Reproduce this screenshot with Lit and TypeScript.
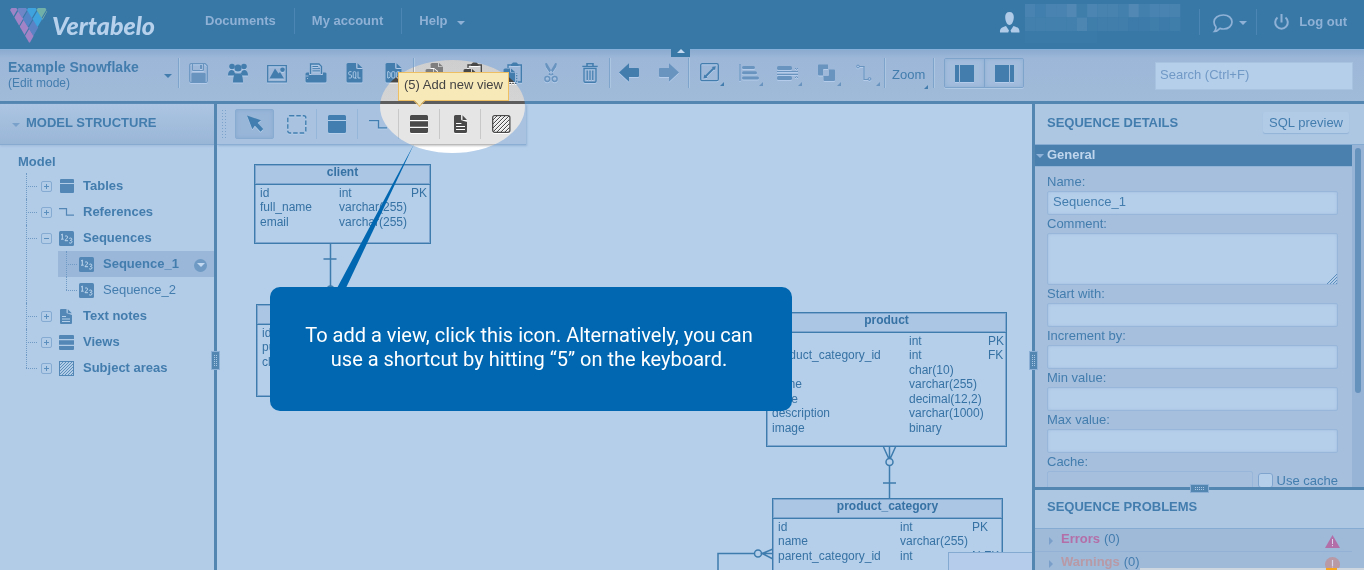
import { LitElement, html, css, svg, nothing, TemplateResult } from "lit";
import { customElement, property } from "lit/decorators.js";
import { classMap } from "lit/directives/class-map.js";

const glyph = (size: number, body: TemplateResult, w = size) =>
  html`<svg class="glyph" width=${w} height=${size} viewBox="0 0 ${w} ${size}" fill="currentColor" aria-hidden="true">${body}</svg>`;

const LIGHT = "#b5cfea";

const icons: Record<string, () => TemplateResult> = {
  save: () => glyph(20, svg`<path d="M2.200.7h14l2.100 2.100V18a1.500 1.500 0 0 1-1.500 1.500H2.200A1.500 1.500 0 0 1 .7 18V2.200A1.500 1.500 0 0 1 2.200.7z" fill="none" stroke="currentColor" stroke-width="1.200"/><path d="M3.500 1v6.500h11V1" fill="none" stroke="currentColor"/><path d="M11 2h2v4h-2zM3.500 10h12a1.200 1.200 0 0 1 1.200 1.200V19H2.300v-7.800A1.200 1.200 0 0 1 3.500 10z"/>`, 19),
  users: () => glyph(20, svg`<circle cx="4" cy="3.500" r="2.800"/><circle cx="16" cy="3.500" r="2.800"/><circle cx="10" cy="5" r="3.600"/><path d="M0 12c0-3 1.500-5 4-5l2 1c.3 1.500 1 2 1.700 2.600L6 12.500H0zM20 12c0-3-1.500-5-4-5l-2 1c-.3 1.500-1 2-1.700 2.600L14 12.500h6zM5 19.500c0-5 1-8.500 3-9h4c2 .5 3 4 3 9z"/>`),
  image: () => glyph(20, svg`<path d="M.7 2.700h18.600v16.100H.7z" fill="none" stroke="currentColor" stroke-width="1.300"/><circle cx="15.500" cy="6.700" r="2.300"/><path d="M2.500 15.500 8 5.500l3.500 5 1.500-1.500 4 6.500z"/>`),
  print: () => glyph(20, svg`<path d="M5.500 11V1h8.500l2.500 2.500V11" fill="none" stroke="currentColor" stroke-width="1.300"/><path d="M7.500 3.500h5.500M7.500 5.700h7.500M7.500 7.900h7.500" stroke="currentColor"/><path d="M2 9.500h2v2.500h14V9.500h1.500A1.500 1.500 0 0 1 21.500 11v7a1.500 1.500 0 0 1-1.500 1.500H2A1.500 1.500 0 0 1 .5 18v-7A1.500 1.500 0 0 1 2 9.500z"/><path d="M.5 13h3M2 15.500h1" stroke="#9fb9d9"/>`, 22),
  sql: () => glyph(20, svg`<path d="M2 0h8v4.500a1.500 1.500 0 0 0 1.500 1.500H16.500v12.500a1 1 0 0 1-1 1H2a1.500 1.500 0 0 1-1.500-1.500V1.500A1.500 1.500 0 0 1 2 0zM11.500.3 16.500 5h-5z"/><path d="M5.500 8.700H3.700a1 1 0 0 0-1 1v1.100a1 1 0 0 0 1 1h.8a1 1 0 0 1 1 1v1.200a1 1 0 0 1-1 1H2.700M8.200 8.700h.6a1 1 0 0 1 1 1v4.300a1 1 0 0 1-1 1h-.6a1 1 0 0 1-1-1V9.700a1 1 0 0 1 1-1zM9 14l1.200 2M12 8.500V15h2.500" fill="none" stroke="${LIGHT}" stroke-width=".9"/>`, 17),
  doc: () => glyph(20, svg`<path d="M2 0h8v4.500a1.500 1.500 0 0 0 1.500 1.500H16.500v12.500a1 1 0 0 1-1 1H2a1.500 1.500 0 0 1-1.500-1.500V1.500A1.500 1.500 0 0 1 2 0zM11.500.3 16.500 5h-5z"/><path d="M2.700 8.700v6.300h1.300l1.200-1.200V9.900L4 8.700zM7.700 8.700h1.200a1 1 0 0 1 1 1V14a1 1 0 0 1-1 1H7.700a1 1 0 0 1-1-1V9.700a1 1 0 0 1 1-1zM14.500 8.700h-1.800a1 1 0 0 0-1 1V14a1 1 0 0 0 1 1h1.800" fill="none" stroke="${LIGHT}" stroke-width=".9"/>`, 17),
  copy: () => glyph(22, svg`<path d="M7 1h6v4h5v10h-5V9L9 6H5.500V2.500A1.500 1.500 0 0 1 7 1zM14 1l4 3.500h-4zM2 7h6v4h5v11H2A1.500 1.500 0 0 1 .5 20.500v-12A1.500 1.500 0 0 1 2 7zM9 7l4 3.500H9z"/>`, 18),
  paste: () => glyph(22, svg`<path d="M5 6V3h13.300v17H13" fill="none" stroke="currentColor" stroke-width="1.400"/><path d="M8 2.500 10 .5h3.500l2 2V4H8zM2 7h6v4h5v11H2A1.500 1.500 0 0 1 .5 20.500v-12A1.500 1.500 0 0 1 2 7zM9 7l4 3.500H9z"/>`, 20),
  duplicate: () => glyph(22, svg`<path d="M5 6V3h13.300v17H15" fill="none" stroke="currentColor" stroke-width="1.400"/><path d="M8 2.500 10 .5h3.500l2 2V4H8zM2 6.500h5v4h5V20H2A1.500 1.500 0 0 1 .5 18.500V8A1.500 1.500 0 0 1 2 6.500zM8 6.500l4 3.500H8z"/><path d="M3.700 21.300h10v-10" fill="none" stroke="currentColor" stroke-width="1.200" stroke-dasharray="1.500 1.300"/>`, 18),
  cut: () => glyph(20, svg`<path d="M1 .5 2.800 0 9.500 11.500l-1.800 1.200L1.800 4zM13 .5 11.200 0 4.500 11.500l1.800 1.200L12.200 4z"/><circle cx="3.300" cy="16" r="2.400" fill="none" stroke="currentColor" stroke-width="1.500"/><circle cx="10.700" cy="16" r="2.400" fill="none" stroke="currentColor" stroke-width="1.500"/>`, 13),
  trash: () => glyph(20, svg`<path d="M.3 3.500h15.400M5 3V.8h6V3" fill="none" stroke="currentColor" stroke-width="1.600"/><path d="M2 5.500h12V18a1.200 1.200 0 0 1-1.200 1.200H3.200A1.200 1.200 0 0 1 2 18z" fill="none" stroke="currentColor" stroke-width="1.400"/><path d="M5.200 7.500v9.500M8 7.500v9.500M10.800 7.500v9.500" stroke="currentColor" stroke-width="1.300"/>`, 15),
  undo: () => glyph(19, svg`<path d="M0 9.500 10 .3V5h9a1 1 0 0 1 1 1v7a1 1 0 0 1-1 1h-9v4.700z"/>`, 22),
  redo: () => glyph(19, svg`<path d="M20 9.500 10 .3V5H1a1 1 0 0 0-1 1v7a1 1 0 0 0 1 1h9v4.700z"/>`, 20),
  line: () => glyph(19, svg`<rect x=".7" y=".7" width="17.600" height="17" rx="1.500" fill="none" stroke="currentColor" stroke-width="1.300"/><path d="M5 14 14.500 4.500" stroke="currentColor" stroke-width="1.800"/><path d="m3.500 15.500.8-4 3.200 3.200zM15.800 3.200l-.8 4-3.200-3.200z"/>`, 17),
  align: () => glyph(19, svg`<path d="M1 1v17" stroke="currentColor" stroke-width="1.200"/><rect x="3" y="3" width="13" height="3" rx="1.500"/><rect x="3" y="8.300" width="15" height="3" rx="1.500"/><rect x="3" y="13.600" width="17" height="3" rx="1.500"/>`, 18),
  spacing: () => glyph(19, svg`<rect y="3" width="15" height="4" rx="1.500"/><rect y="13" width="15" height="4" rx="1.500"/><path d="M0 8.500h21M0 11.500h21" stroke="currentColor"/><path d="m18 5 1.500 1.500L21 5M18 15l1.500-1.500L21 15" fill="none" stroke="currentColor"/>`, 20),
  order: () => glyph(18, svg`<path d="M1 .5h9V5H6a1 1 0 0 0-1 1v5.500H1a1 1 0 0 1-1-1v-9a1 1 0 0 1 1-1z"/><path d="M11 5.500h5a1 1 0 0 1 1 1V16a1 1 0 0 1-1 1H6.500a1 1 0 0 1-1-1v-4H10a1 1 0 0 0 1-1z"/>`, 15),
  connector: () => glyph(18, svg`<path d="M3 2.500h5V15.500h4" fill="none" stroke="currentColor" stroke-width="1.200"/><circle cx="2" cy="2.500" r="1.400" fill="none" stroke="currentColor"/><circle cx="13.500" cy="15" r="1.400" fill="none" stroke="currentColor"/>`, 17),
  leftPane: () => glyph(17, svg`<path d="M0 0h4v17H0zM5 0h14v17H5z"/>`, 19),
  rightPane: () => glyph(17, svg`<path d="M0 0h14v17H0zM15 0h4v17h-4z"/>`, 19),
  pointer: () => glyph(18, svg`<path d="M0 .5 14 5.300l-3.300 2.600 5.500 6-2.600 2.800-5.700-6-2.600 3.600z"/>`, 16),
  marquee: () => glyph(19, svg`<rect x=".8" y=".8" width="18" height="17.200" rx="2" fill="none" stroke="currentColor" stroke-width="1.400" stroke-dasharray="4.500 2"/>`, 19),
  table: () => glyph(18, svg`<path d="M1.500 0h15A1.500 1.500 0 0 1 18 1.500V5H0V1.500A1.500 1.500 0 0 1 1.500 0zM0 6h18v10.500a1.500 1.500 0 0 1-1.500 1.500h-15A1.500 1.500 0 0 1 0 16.500z"/>`),
  reference: () => glyph(10, svg`<path d="M0 1.700h9.500v7.200H18" fill="none" stroke="currentColor" stroke-width="1.300"/>`, 18),
  view: () => glyph(18, svg`<path d="M1.500 0h15A1.500 1.500 0 0 1 18 1.500V5H0V1.500A1.500 1.500 0 0 1 1.500 0zM0 6.200h18v5.500H0zM0 13h18v3.500a1.500 1.500 0 0 1-1.500 1.500h-15A1.500 1.500 0 0 1 0 16.500z"/>`),
  note: () => glyph(18, svg`<path d="M1.500 0H7v4.200A1.300 1.300 0 0 0 8.300 5.500L13 7v9.500a1.500 1.500 0 0 1-1.500 1.500h-10A1.500 1.500 0 0 1 0 16.500v-15A1.500 1.500 0 0 1 1.500 0zM8.500.3 13 5H8.500z"/><path d="M2.300 8.500h5M2.300 11.500h8.500M2.300 14.500h8.500" stroke="#dfeaf6" stroke-width="1.200"/>`, 13),
  area: () => glyph(18, svg`<rect x=".7" y=".7" width="17.200" height="16.600" rx="2" fill="none" stroke="currentColor" stroke-width="1.300"/><path d="M1 5l4-4M1 9l8-8M1 13l12-12M1 17 17 1M5 17 17.500 4.500M9 17l8.500-8.500M13 17l4.500-4.500" stroke="currentColor" stroke-width="1"/>`, 19),
  tTable: () => glyph(14, svg`<path d="M1 0h12a1 1 0 0 1 1 1v3H0V1a1 1 0 0 1 1-1zM0 5h14v8a1 1 0 0 1-1 1H1a1 1 0 0 1-1-1z"/>`),
  tReference: () => glyph(8, svg`<path d="M0 .6h7.500v6.500H15" fill="none" stroke="currentColor" stroke-width="1.200"/>`, 15),
  tSequence: () => glyph(15, svg`<rect width="15" height="15" rx="1.500"/><path d="M2 4.200 3.300 3v5M2 8.200h2.700M6 5.500c.3-.9 2.700-.9 2.600.6C8.500 7.300 6.500 8.400 6 9.700h3M10.300 7.500c.6-.8 2.600-.6 2.500.6 0 1-.8 1.300-1.500 1.300 1 0 1.700.5 1.700 1.400 0 1.500-2.200 1.700-2.900.8" fill="none" stroke="#c3d9ef" stroke-width=".95"/>`),
  tNote: () => glyph(15, svg`<path d="M2 0h5.500v3.500A1 1 0 0 0 8.500 4.500L13 6v8a1 1 0 0 1-1 1H2a1 1 0 0 1-1-1V1a1 1 0 0 1 1-1zM8.800.3l4 4h-4z"/><path d="M3 7.500h4M3 10h8M3 12.500h8" stroke="${LIGHT}"/>`, 15),
  tView: () => glyph(15, svg`<path d="M1 0h13a1 1 0 0 1 1 1v3H0V1a1 1 0 0 1 1-1zM0 5.200h15v4.500H0zM0 11h15v3a1 1 0 0 1-1 1H1a1 1 0 0 1-1-1z"/>`),
  tArea: () => glyph(15, svg`<rect x=".5" y=".5" width="14" height="14" fill="none" stroke="currentColor"/><path d="M1 4l3-3M1 7l6-6M1 10l9-9M1 13 13 1M2.500 14.500l12-12M5.500 14.500l9-9M8.500 14.500l6-6M11.500 14.500l3-3" stroke="currentColor" stroke-width=".9"/>`),
};

interface Tool { icon: string; label: string; disabled?: boolean; menu?: boolean; }

const toolGroups: Tool[][] = [
  [
    { icon: "save", label: "Save", disabled: true },
    { icon: "users", label: "Share" },
    { icon: "image", label: "Export image" },
    { icon: "print", label: "Print" },
    { icon: "sql", label: "Generate SQL" },
    { icon: "doc", label: "Generate documentation" },
  ],
  [
    { icon: "copy", label: "Copy", disabled: true },
    { icon: "paste", label: "Paste" },
    { icon: "duplicate", label: "Paste with references" },
    { icon: "cut", label: "Cut", disabled: true },
    { icon: "trash", label: "Delete" },
  ],
  [
    { icon: "undo", label: "Undo" },
    { icon: "redo", label: "Redo", disabled: true },
  ],
  [
    { icon: "line", label: "Line style", menu: true },
    { icon: "align", label: "Align", disabled: true, menu: true },
    { icon: "spacing", label: "Distribute", disabled: true, menu: true },
    { icon: "order", label: "Order", disabled: true, menu: true },
    { icon: "connector", label: "Connector", disabled: true, menu: true },
  ],
];

const base = css`
  * { box-sizing: border-box; }
  button { font: inherit; color: inherit; background: none; border: 0; padding: 0; margin: 0; }
  a { color: inherit; text-decoration: none; }
  .glyph { display: block; flex: none; overflow: visible; }
  .caret { width: 0; height: 0; border: 4px solid transparent; border-top-color: currentColor; border-bottom: 0; flex: none; }
`;

const logoTiles: [number, number, string][] = [
  [2.5, 3, "#9d84c6"], [8.3, 12, "#a283c5"], [13.8, 21, "#a283c5"], [19.3, 30, "#a283c5"],
  [12.2, 3, "#6f86c6"], [17.8, 12, "#5584c6"], [23.4, 21, "#5c82c4"],
  [21.8, 3, "#3fa4de"], [27.5, 12, "#3fa4de"],
  [31.5, 3, "#70b0a8"], [37, 12, "#86b8a4"],
];

@customElement("app-header")
class AppHeader extends LitElement {
  static styles = [base, css`
    :host { display: flex; height: 49px; background: #3878a7; color: #8fb1d5; font-weight: bold; position: relative; }
    .brand { width: 187px; display: flex; align-items: flex-start; padding: 7px 0 0 10px; gap: 2px; }
    .word { font: italic 900 25px/36px Lato, sans-serif; color: #b7d1ec; }
    nav { display: flex; }
    .item { display: flex; align-items: center; gap: 10px; padding: 0 18px; height: 42px; line-height: 42px; position: relative; }
    .item .caret { margin-top: 4px; }
    .item + .item::before { content: ""; align-self: center; width: 1px; height: 26px; background: #4b86b4; margin: 0 7px 0 -18px; }
    .right { margin-left: auto; display: flex; }
    .user { display: flex; gap: 5px; padding: 4px 0 0; }
    .user .glyph.person { margin-top: 8px; }
    .sep { width: 1px; height: 26px; margin-top: 9px; background: #4b86b4; }
    .chat { display: flex; align-items: center; gap: 6px; padding: 2px 9px 5px 13px; }
    .logout { display: flex; align-items: center; gap: 10px; padding: 0 17px; height: 42px; }
    .logout .glyph { margin-top: 3px; }
    .fold { position: absolute; left: 671px; top: 49px; width: 19px; height: 8px; background: #3878a7; display: flex; justify-content: center; z-index: 2; }
    .up { width: 0; height: 0; border: 4px solid transparent; border-bottom-color: #c3d9ef; border-top: 0; }
  `];
  render() {
    const upper = ["#4983b1", "#4180ae", "#4983b1", "#4983b1", "#5289b4", "#3f7dab", "#4c85b1", "#4882af", "#4882af", "#4480ae", "#5188b4", "#4480ae", "#4983b1", "#4983b1", "#4882af"];
    const lower = ["#4480ae", "#4480ae", "#4480ae", "#4480ae", "#4480ae", "#4e86b2", "#3f7dab", "#417eac", "#417eac", "#417eac", "#3d7baa", "#3d7baa", "#3f7dab", "#3d7baa", "#3f7dab"];
    return html`
      <div class="brand">
        <svg class="glyph" width="40" height="36" viewBox="0 0 40 36" role="img" aria-label="Vertabelo logo">
          <clipPath id="v"><path d="M0 3 1.500 1H39L20 35.500h-1z"/></clipPath>
          <g clip-path="url(#v)">${logoTiles.map(([x, y, c]) => svg`<path d="M${x} ${y - 8.2}l4.900 8-4.900 8.300-4.900-8z" fill=${c}/>`)}</g>
        </svg>
        <span class="word">Vertabelo</span>
      </div>
      <nav>
        <a class="item" href="#documents">Documents</a>
        <a class="item" href="#account">My account</a>
        <a class="item" href="#help">Help<span class="caret"></span></a>
      </nav>
      <div class="right">
        <div class="user">
          <svg class="glyph person" width="20" height="21" viewBox="0 0 20 21" fill="#b0cbe8" aria-hidden="true"><path d="M9.500 0c3 0 4.300 2 4.300 5 0 3.500-1.600 8-4.300 8S5.200 8.500 5.200 5c0-3 1.300-5 4.300-5zM0 20.500c-.3-4 1.500-5.200 6-6.500l3 4.500-.8 2zM19.500 20.500c.3-4-1.500-5.200-6-6.500l-3 4.500.8 2z"/></svg>
          <svg class="glyph" width="174" height="40" viewBox="0 0 174 40" aria-hidden="true">
            ${upper.map((c, i) => svg`<rect x=${i * 10.35} y="0" width="10.400" height="13.500" fill=${c}/>`)}
            ${lower.map((c, i) => svg`<rect x=${i * 10.35} y="13.500" width="10.400" height="13.500" fill=${c}/>`)}
            <path d="M0 27h72v12H0z" fill="#3a7aa8"/>
          </svg>
        </div>
        <div class="sep"></div>
        <button class="chat" aria-label="Feedback">
          <svg class="glyph" width="20" height="20" viewBox="0 0 20 20" aria-hidden="true"><path d="M10.500 2c5 0 8.500 3 8.500 7s-3.500 7-8.500 7c-1.300 0-2.500-.2-3.500-.6C5.500 17 3.500 18.500 1.500 18.500c1-1 1.500-3 1.500-4.500C1.700 12.600 1 11 1 9c0-4 4-7 9.500-7z" fill="none" stroke="currentColor" stroke-width="1.700"/></svg>
          <span class="caret"></span>
        </button>
        <div class="sep"></div>
        <a class="logout" href="#logout">
          <svg class="glyph" width="15" height="17" viewBox="0 0 15 17" aria-hidden="true"><path d="M7.500 0v8.500M3.500 3.500a6.300 6.300 0 1 0 8 0" fill="none" stroke="currentColor" stroke-width="2"/></svg>
          Log out
        </a>
      </div>
      <button class="fold" aria-label="Collapse header"><span class="up"></span></button>`;
  }
}

@customElement("app-toolbar")
class AppToolbar extends LitElement {
  static styles = [base, css`
    :host { display: flex; height: 55px; border-top: 1px solid #86b0da; border-bottom: 3px solid #5486b2; background: linear-gradient(#8babcf, #9cb7d8 8px, #a0bad9); color: #437dae; }
    .title { width: 178px; padding: 8px 6px 0 8px; display: grid; grid-template-columns: 1fr auto; align-content: start; text-align: left; }
    .name { font: bold 14px/18px "Liberation Sans", sans-serif; }
    .mode { grid-column: 1; font-size: 12px; line-height: 14px; }
    .title .caret { grid-column: 2; grid-row: 1 / 3; align-self: center; margin-top: 3px; }
    .group { display: flex; }
    .sep { width: 1px; height: 30px; margin-top: 8px; background: #7ea4cc; box-shadow: 1px 0 #acc5e1; }
    .tool { width: 39px; height: 45px; display: flex; align-items: center; justify-content: center; position: relative; }
    .tool .glyph, .pane .glyph { filter: drop-shadow(0 1px 0 #b5cdea); }
    .off { color: #6994c0; }
    .menu::after { content: ""; position: absolute; right: 4px; bottom: 9px; border: 2px solid currentColor; border-top-color: transparent; border-left-color: transparent; }
    .zoom { width: 48px; height: 48px; position: relative; text-align: left; padding-left: 7px; }
    .zoom::after { right: 5px; }
    .panes { display: flex; margin: 8px 0 0 10px; height: 30px; border: 1px solid #7ea4cc; border-radius: 2px; box-shadow: 0 1px #b0c9e5; }
    .pane { width: 39px; display: flex; align-items: center; justify-content: center; background: #a3bddd; box-shadow: inset 0 0 4px #8eafd3; }
    .pane + .pane { border-left: 1px solid #7ea4cc; }
    .search { margin: 12px 11px 0 auto; width: 198px; height: 28px; border: 1px solid #a8c3e0; background: #b5cfea; padding: 0 4px 4px; font: 13px "Liberation Sans", sans-serif; color: #437dae; border-radius: 0; }
    .search::placeholder { color: #7199c6; opacity: 1; }
  `];
  render() {
    return html`
      <button class="title"><span class="name">Example Snowflake</span><span class="mode">(Edit mode)</span><span class="caret"></span></button>
      ${toolGroups.map((g) => html`<div class="sep"></div><div class="group">${g.map((t) => html`
        <button class=${classMap({ tool: true, off: !!t.disabled, menu: !!t.menu })} aria-label=${t.label}>${icons[t.icon]()}</button>`)}</div>`)}
      <div class="sep"></div>
      <button class="zoom menu">Zoom</button>
      <div class="sep"></div>
      <div class="panes">
        <button class="pane" aria-label="Toggle left panel">${icons.leftPane()}</button>
        <button class="pane" aria-label="Toggle right panel">${icons.rightPane()}</button>
      </div>
      <input class="search" type="search" placeholder="Search (Ctrl+F)" aria-label="Search">`;
  }
}

interface Node { label: string; icon: string; open?: boolean; children?: { label: string; selected?: boolean }[]; }

const tree: Node[] = [
  { label: "Tables", icon: "tTable" },
  { label: "References", icon: "tReference" },
  { label: "Sequences", icon: "tSequence", open: true, children: [{ label: "Sequence_1", selected: true }, { label: "Sequence_2" }] },
  { label: "Text notes", icon: "tNote" },
  { label: "Views", icon: "tView" },
  { label: "Subject areas", icon: "tArea" },
];

@customElement("model-tree")
class ModelTree extends LitElement {
  static styles = [base, css`
    :host { display: block; background: #b2cbe7; color: #437dae; }
    .head { display: flex; align-items: center; gap: 6px; height: 41px; padding: 0 12px 4px; background: linear-gradient(#abc5e2, #9ab6d7); border-bottom: 1px solid #86aad0; box-shadow: 0 1px 2px #9dbadb; font: bold 13px "Liberation Sans", sans-serif; margin: 0; }
    .head .caret { color: #7aa1ca; margin-top: 5px; }
    .root { font-weight: bold; padding: 8px 18px 0; line-height: 18px; }
    ul { list-style: none; margin: 0; padding: 0; }
    .top { padding-left: 26px; padding-top: 2px; }
    .top > li { position: relative; }
    .top > li::before { content: ""; position: absolute; left: 0; top: 0; bottom: 0; border-left: 1px dotted #6f9ac6; }
    .top > li:last-child::before { height: 13px; }
    .row { display: flex; align-items: center; height: 26px; font-weight: bold; }
    .text { padding-bottom: 2px; }
    .stub { width: 11px; border-top: 1px dotted #6f9ac6; flex: none; }
    .box { width: 11px; height: 11px; border: 1px solid #86abd3; border-radius: 2px; margin-left: 4px; flex: none; display: flex; align-items: center; justify-content: center; }
    .ico { width: 15px; display: flex; justify-content: center; margin: 0 9px 0 7px; color: #5388b6; }
    .sub { margin-left: 32px; }
    .sub .row { padding-left: 8px; font-weight: normal; position: relative; }
    .sub .row::before { content: ""; position: absolute; left: 8px; top: 0; height: 26px; border-left: 1px dotted #6f9ac6; }
    .sub li:last-child .row::before { height: 13px; }
    .sub .ico { margin: 0 9px 0 2px; }
    .sub .selected { font-weight: bold; background: #9ab7da; }
    .more { margin: 2px 7px 0 auto; width: 13px; height: 13px; border-radius: 50%; background: #6e9ac4; color: #c3d9ef; display: flex; align-items: center; justify-content: center; }
  `];
  render() {
    return html`
      <h2 class="head"><span class="caret"></span>MODEL STRUCTURE</h2>
      <div class="root">Model</div>
      <ul class="top">${tree.map((n) => html`<li>
        <div class="row"><span class="stub"></span>
          <button class="box" aria-label=${n.open ? "Collapse" : "Expand"}><svg class="glyph" width="5" height="5" viewBox="0 0 5 5" aria-hidden="true"><path d=${n.open ? "M0 2.500h5" : "M0 2.500h5M2.500 0v5"} stroke="#5b8fbe"/></svg></button>
          <span class="ico">${icons[n.icon]()}</span><span class="text">${n.label}</span></div>
        ${n.children ? html`<ul class="sub">${n.children.map((c) => html`<li><div class=${classMap({ row: true, selected: !!c.selected })}>
          <span class="stub"></span><span class="ico">${icons.tSequence()}</span><span class="text">${c.label}</span>
          ${c.selected ? html`<button class="more" aria-label="Sequence menu"><span class="caret"></span></button>` : nothing}</div></li>`)}</ul>` : nothing}
      </li>`)}</ul>`;
  }
}

interface Entity { name: string; x: number; y: number; w: number; h: number; cols: [number, number]; rows: string[][]; }

const entities: Entity[] = [
  { name: "client", x: 37, y: 60, w: 177, h: 80, cols: [79, 72], rows: [["id", "int", "PK"], ["full_name", "varchar(255)", ""], ["email", "varchar(255)", ""]] },
  { name: "", x: 39, y: 200, w: 200, h: 93, cols: [79, 72], rows: [["id"], ["purchase_no"], ["client_id"]] },
  { name: "product", x: 549, y: 208, w: 241, h: 135, cols: [137, 79], rows: [["", "int", "PK"], ["product_category_id", "int", "FK"], ["", "char(10)", ""], ["name", "varchar(255)", ""], ["price", "decimal(12,2)", ""], ["description", "varchar(1000)", ""], ["image", "binary", ""]] },
  { name: "product_category", x: 555, y: 394, w: 231, h: 92, cols: [122, 72], rows: [["id", "int", "PK"], ["name", "varchar(255)", ""], ["parent_category_id", "int", "N FK"]] },
];

@customElement("diagram-canvas")
class DiagramCanvas extends LitElement {
  static styles = [base, css`
    :host { display: block; position: relative; overflow: hidden; background: #b5cfea; color: #3672a4; min-width: 0; }
    .links { position: absolute; left: 0; top: 0; }
    .entity { position: absolute; border: 1px solid #3e7cae; box-shadow: inset 0 0 0 1px #7ea6cf; font-size: 12px; background: #b5cfea; }
    .caption { height: 20px; line-height: 15px; font-weight: bold; text-align: center; background: #abc5e4; border-bottom: 1px solid #3e7cae; box-shadow: inset 0 0 0 1px #7ea6cf; }
    table { border-collapse: collapse; table-layout: fixed; width: 100%; }
    td { padding: 0; height: 15px; line-height: 14px; white-space: nowrap; }
    tr:nth-child(even) td { height: 14px; }
    td:first-child { padding-left: 5px; }
    .views { position: relative; width: 309px; height: 41px; display: flex; align-items: flex-start; padding: 5px 2px 0 4px; background: #a8c2e0; border-bottom: 1px solid #8bafd4; box-shadow: 1px 1px 2px #93b3d6; color: #427fb0; }
    .grip { width: 5px; height: 29px; margin-right: 9px; background: radial-gradient(circle, #7ba2cb 40%, transparent 45%) 0 0 / 3px 3px; }
    .v { width: 41px; height: 30px; flex: none; display: flex; align-items: center; justify-content: center; border-left: 1px solid #95b5d9; }
    .v .glyph { filter: drop-shadow(0 1px 0 #b5cfea); }
    .v.active { width: 39px; margin-right: 1px; background: #98b6d8; border: 1px solid #87abd1; border-radius: 2px; box-shadow: inset 0 0 4px #86a9cf; }
    .v.active + .v { border-left-color: transparent; }
    .mini { position: absolute; right: 0; bottom: 0; width: 84px; height: 18px; border: 1px solid #84aad2; border-right: 0; border-bottom: 0; background: #b5cdea; }
  `];
  render() {
    const v = (icon: string, label: string) => html`<button class="v" aria-label=${label}>${icons[icon]()}</button>`;
    return html`
      <svg class="links" width="815" height="466" viewBox="217 104 815 466" fill="none" stroke="#3e7cae" stroke-width="1.500" aria-hidden="true">
        <path d="M330.500 244v62M323.500 259h13M889.500 466v32M883 483h13M889.500 447v11M883.500 447l5 11M895.500 447l-5 11M773 549l-11 4.500 11 5.500M773 553.500h-11M754 553.500h-36V571"/>
        <circle cx="889.500" cy="462" r="3.500"/><circle cx="758" cy="553.500" r="3.500"/><circle cx="330.500" cy="289" r="3"/>
      </svg>
      ${entities.map((e) => html`<div class="entity" style="left:${e.x}px;top:${e.y}px;width:${e.w}px;height:${e.h}px">
        <div class="caption">${e.name}</div>
        <table><colgroup><col style="width:${e.cols[0] + 5}px"><col style="width:${e.cols[1]}px"><col></colgroup>
          <tbody>${e.rows.map((r) => html`<tr>${r.map((c) => html`<td>${c}</td>`)}</tr>`)}</tbody></table>
      </div>`)}
      <div class="views">
        <span class="grip"></span>
        <button class="v active" aria-label="Select">${icons.pointer()}</button>
        ${v("marquee", "Select area")}${v("table", "Add new table")}${v("reference", "Add new reference")}${v("view", "Add new view")}${v("note", "Add text note")}${v("area", "Add subject area")}
      </div>
      <div class="mini"></div>`;
  }
}

@customElement("details-panel")
class DetailsPanel extends LitElement {
  static styles = [base, css`
    :host { display: flex; flex-direction: column; background: #a5bfdd; color: #437dae; min-height: 0; }
    h2 { font: bold 13px "Liberation Sans", sans-serif; margin: 0; }
    .head { display: flex; align-items: center; justify-content: space-between; height: 41px; flex: none; padding: 0 15px 4px 12px; background: #adc7e3; border-bottom: 1px solid #86abd2; }
    .preview { height: 21px; padding: 0 6px; border-radius: 2px; background: #b1cae6; box-shadow: 0 1px 1px #92b2d6; }
    .scroll { flex: 1; min-height: 0; overflow: hidden; display: grid; grid-template-columns: 1fr 12px; }
    .track { background: #97b3d5; padding: 3px; }
    .thumb { width: 6px; height: 245px; border-radius: 3px; background: #6592bd; }
    .general { width: 100%; height: 22px; display: flex; align-items: center; gap: 3px; padding: 0 1px 2px; background: #4a80ae; color: #c0d6ed; font-weight: bold; border-bottom: 1px solid #92b4d7; }
    .general .caret { color: #8fb2d8; margin-top: 3px; }
    .form { padding: 6px 14px 0 12px; min-height: 0; }
    label { display: block; height: 18px; line-height: 18px; }
    input[type="text"], textarea { display: block; width: 100%; height: 24px; margin: 0; padding: 0 5px 3px; border: 1px solid #97b6d9; border-radius: 2px; box-shadow: inset 0 0 3px #9dbadd; background: #b5cfea; font: 13px "Liberation Sans", sans-serif; color: inherit; }
    textarea { height: 52px; resize: none; }
    .area { position: relative; }
    .resize { position: absolute; right: 1px; bottom: 1px; }
    .cache { display: flex; gap: 5px; align-items: flex-start; }
    .cache input[type="text"] { flex: 1; background: #a5bfdd; box-shadow: none; }
    .cache label { display: flex; gap: 4px; padding-top: 2px; line-height: 16px; }
    input[type="checkbox"] { appearance: none; margin: 0; width: 15px; height: 15px; border: 1px solid #7fa5ce; border-radius: 3px; background: #b5cfea; }
    .split { height: 3px; background: #5486b2; flex: none; display: flex; justify-content: center; align-items: center; }
    .knob { flex: none; width: 17px; height: 7px; position: relative; z-index: 2; background: #5486b2; outline: 1px solid #8cb0d6; display: flex; justify-content: center; align-items: center; }
    .dots { width: 9px; height: 3px; border: dotted #a9c6e4; border-width: 1px 0; }
    .problems { flex: none; height: 80px; overflow: hidden; position: relative; background: #9fb9d9; }
    .phead { height: 39px; padding: 9px 12px; background: #adc7e3; border-bottom: 1px solid #86abd2; }
    .prow { width: calc(100% - 12px); height: 23px; display: flex; align-items: center; padding: 0 12px 4px 14px; border-bottom: 1px solid #92b1d5; }
    .prow b { margin: 0 4px 0 8px; }
    .tri { width: 0; height: 0; border: 4px solid transparent; border-left-color: #7aa0c9; border-right: 0; margin-top: 5px; }
    .err b, .err .glyph { color: #b36fa8; }
    .warn b, .warn .glyph { color: #b899a6; }
    .prow .glyph { margin-left: auto; margin-top: 6px; }
    .strip { position: absolute; right: 0; bottom: 0; left: 105px; height: 2px; background: #ced7e0; }
    .spot { position: absolute; right: 27px; bottom: 0; width: 11px; height: 2px; background: #f7a51c; }
  `];
  render() {
    const field = (id: string, label: string, value = "") => html`<label for=${id}>${label}</label><input id=${id} type="text" .value=${value}>`;
    return html`
      <div class="head"><h2>SEQUENCE DETAILS</h2><button class="preview">SQL preview</button></div>
      <div class="scroll">
        <div class="form-col">
          <button class="general"><span class="caret"></span>General</button>
          <div class="form">
            ${field("name", "Name:", "Sequence_1")}
            <label for="comment">Comment:</label>
            <div class="area"><textarea id="comment"></textarea><svg class="glyph resize" width="10" height="10" viewBox="0 0 10 10" aria-hidden="true"><path d="M0 10 10 0M3 10l7-7M6 10l4-4M9 10l1-1" stroke="#5c8fbd"/></svg></div>
            ${field("start", "Start with:")}${field("inc", "Increment by:")}${field("min", "Min value:")}${field("max", "Max value:")}
            <label for="cache">Cache:</label>
            <div class="cache"><input id="cache" type="text"><label><input type="checkbox">Use cache</label></div>
          </div>
        </div>
        <div class="track"><div class="thumb"></div></div>
      </div>
      <div class="split"><span class="knob"><span class="dots"></span></span></div>
      <div class="problems">
        <h2 class="phead">SEQUENCE PROBLEMS</h2>
        <button class="prow err"><span class="tri"></span><b>Errors</b>(0)
          <svg class="glyph" width="15" height="13" viewBox="0 0 15 13" aria-hidden="true"><path d="M7.500 0 15 13H0z" fill="currentColor"/><path d="M7.500 4v5M7.500 10v1.200" stroke="#d6d5ea"/></svg></button>
        <button class="prow warn"><span class="tri"></span><b>Warnings</b>(0)
          <svg class="glyph" width="15" height="15" viewBox="0 0 15 15" aria-hidden="true"><circle cx="7.500" cy="7.500" r="7.500" fill="currentColor"/><path d="M7.500 3v6.500M7.500 10.500V12" stroke="#d6d5ea" stroke-width="1.200"/></svg></button>
        <div class="strip"></div><div class="spot"></div>
      </div>`;
  }
}

@customElement("tour-step")
class TourStep extends LitElement {
  @property() tip = "";
  @property() text = "";
  static styles = [base, css`
    :host { position: absolute; inset: 0; pointer-events: none; z-index: 5; }
    .lens { position: absolute; left: 380px; top: 60px; width: 145px; height: 93px; border-radius: 50%; backdrop-filter: grayscale(1) brightness(0.894) contrast(2.37); }
    .tip { position: absolute; left: 398px; top: 72px; height: 29px; padding: 0 5px; line-height: 24px; background: #f8e9b9; border: 1px solid #efbf63; color: #444; white-space: nowrap; }
    .tip::after { content: ""; position: absolute; left: 16px; bottom: -5px; width: 8px; height: 8px; transform: rotate(45deg); background: linear-gradient(135deg, transparent 50%, #f8e9b9 50%); border: solid #efbf63; border-width: 0 1px 1px 0; }
    .beam { position: absolute; left: 330px; top: 144px; }
    .card { position: absolute; left: 270px; top: 287px; width: 522px; height: 124px; display: flex; align-items: center; justify-content: center; margin: 0; padding: 0 32px 4px 28px; border-radius: 10px; background: #0067b0; color: #fff; font: 20px/24px Roboto, sans-serif; text-align: center; }
  `];
  render() {
    return html`<div class="lens"></div>
      <div class="tip" role="tooltip">${this.tip}</div>
      <svg class="beam" width="90" height="146" viewBox="330 144 90 146" aria-hidden="true"><path d="M414 144 336 290h9z" fill="#0067b0"/></svg>
      <p class="card">${this.text}</p>`;
  }
}

@customElement("app-root")
class AppRoot extends LitElement {
  static styles = [base, css`
    :host { display: flex; flex-direction: column; height: 100vh; position: relative; overflow: hidden; font: 13px "Liberation Sans", Arial, sans-serif; background: #b5cfea; }
    .work { flex: 1; min-height: 0; display: grid; grid-template-columns: 214px 3px 1fr 3px 329px; }
    .split { background: #5486b2; display: flex; align-items: center; justify-content: center; padding-top: 46px; }
    .knob { flex: none; position: relative; z-index: 3; width: 7px; height: 17px; outline: 1px solid #8cb0d6; background: #5486b2; display: flex; justify-content: center; align-items: center; }
    .dots { width: 3px; height: 11px; border: dotted #a9c6e4; border-width: 0 1px; }
  `];
  render() {
    const split = html`<div class="split"><span class="knob"><span class="dots"></span></span></div>`;
    return html`
      <app-header></app-header>
      <app-toolbar></app-toolbar>
      <div class="work">
        <model-tree></model-tree>${split}
        <diagram-canvas></diagram-canvas>${split}
        <details-panel></details-panel>
      </div>
      <tour-step tip="(5) Add new view" text="To add a view, click this icon. Alternatively, you can use a shortcut by hitting “5” on the keyboard."></tour-step>`;
  }
}
